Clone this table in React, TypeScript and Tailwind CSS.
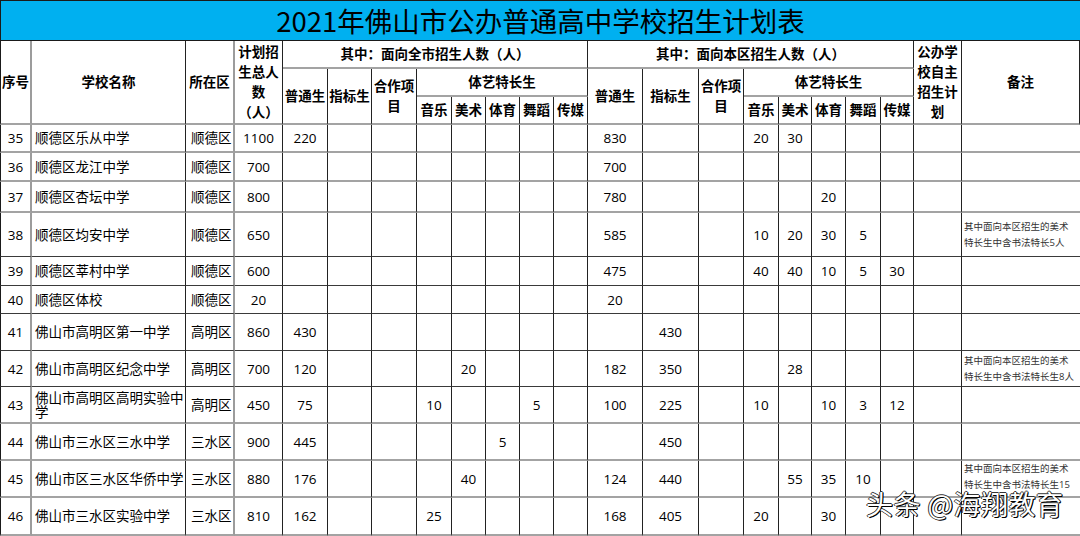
const FONT = "font-['Open_Sans','Noto_Sans_CJK_SC',sans-serif]";

type Row = {
  no: string;
  name: string;
  district: string;
  total: string;
  vals: Record<number, string>;
  note?: string[];
  noteTop?: boolean;
  gray: boolean;
};

const rows: Row[] = [
  { no: "35", name: "顺德区乐从中学", district: "顺德区", total: "1100", vals: { 4: "220", 12: "830", 15: "20", 16: "30" }, gray: true },
  { no: "36", name: "顺德区龙江中学", district: "顺德区", total: "700", vals: { 12: "700" }, gray: true },
  { no: "37", name: "顺德区杏坛中学", district: "顺德区", total: "800", vals: { 12: "780", 17: "20" }, gray: true },
  {
    no: "38", name: "顺德区均安中学", district: "顺德区", total: "650",
    vals: { 12: "585", 15: "10", 16: "20", 17: "30", 18: "5" },
    note: ["其中面向本区招生的美术", "特长生中含书法特长5人"], gray: false,
  },
  { no: "39", name: "顺德区莘村中学", district: "顺德区", total: "600", vals: { 12: "475", 15: "40", 16: "40", 17: "10", 18: "5", 19: "30" }, gray: false },
  { no: "40", name: "顺德区体校", district: "顺德区", total: "20", vals: { 12: "20" }, gray: false },
  { no: "41", name: "佛山市高明区第一中学", district: "高明区", total: "860", vals: { 4: "430", 13: "430" }, gray: false },
  {
    no: "42", name: "佛山市高明区纪念中学", district: "高明区", total: "700",
    vals: { 4: "120", 8: "20", 12: "182", 13: "350", 16: "28" },
    note: ["其中面向本区招生的美术", "特长生中含书法特长生8人"], gray: false,
  },
  {
    no: "43", name: "佛山市高明区高明实验中学", district: "高明区", total: "450",
    vals: { 4: "75", 7: "10", 10: "5", 12: "100", 13: "225", 15: "10", 17: "10", 18: "3", 19: "12" }, gray: true,
  },
  { no: "44", name: "佛山市三水区三水中学", district: "三水区", total: "900", vals: { 4: "445", 9: "5", 13: "450" }, gray: true },
  {
    no: "45", name: "佛山市区三水区华侨中学", district: "三水区", total: "880",
    vals: { 4: "176", 8: "40", 12: "124", 13: "440", 16: "55", 17: "35", 18: "10" },
    note: ["其中面向本区招生的美术", "特长生中含书法特长生15"], noteTop: true, gray: true,
  },
  { no: "46", name: "佛山市三水区实验中学", district: "三水区", total: "810", vals: { 4: "162", 7: "25", 12: "168", 13: "405", 15: "20", 17: "30" }, gray: true },
];

// right border per column: 序号 and 所在区 have the lighter double rule
function rightBorder(col: number) {
  return col === 0 || col === 2
    ? "border-r-2 border-r-[#9c9c9c]"
    : "border-r border-r-[#222222]";
}

const GRAY_B = "border-b-2 border-b-[#a3a3a3]";
const DARK_B = "border-b border-b-[#3a3a3a]";

function Head({
  children,
  col,
  span = "",
}: {
  children: React.ReactNode;
  col: number;
  span?: string;
}) {
  return (
    <div
      className={`flex items-center justify-center text-center font-bold text-[13.5px] leading-[20px] text-black ${span} ${rightBorder(col)} ${GRAY_B} ${col === 0 ? "border-l border-l-[#1a1a1a]" : ""}`}
    >
      <div>{children}</div>
    </div>
  );
}

const subs = ["音乐", "美术", "体育", "舞蹈", "传媒"];

function HeaderCells() {
  return (
    <>
      <Head col={0} span="row-span-3">序号</Head>
      <Head col={1} span="row-span-3">学校名称</Head>
      <Head col={2} span="row-span-3">所在区</Head>
      <Head col={3} span="row-span-3">
        计划招<br />生总人<br />数<br />（人）
      </Head>
      <Head col={11} span="col-span-8">其中：面向全市招生人数（人）</Head>
      <Head col={19} span="col-span-8">其中：面向本区招生人数（人）</Head>
      <Head col={20} span="row-span-3">
        公办学<br />校自主<br />招生计<br />划
      </Head>
      <Head col={21} span="row-span-3">备注</Head>

      <Head col={4} span="row-span-2">普通生</Head>
      <Head col={5} span="row-span-2">指标生</Head>
      <Head col={6} span="row-span-2">
        合作项<br />目
      </Head>
      <Head col={11} span="col-span-5">体艺特长生</Head>
      <Head col={12} span="row-span-2">普通生</Head>
      <Head col={13} span="row-span-2">指标生</Head>
      <Head col={14} span="row-span-2">
        合作项<br />目
      </Head>
      <Head col={19} span="col-span-5">体艺特长生</Head>

      {subs.map((s, i) => (
        <Head key={"l" + s} col={7 + i}>{s}</Head>
      ))}
      {subs.map((s, i) => (
        <Head key={"r" + s} col={15 + i}>{s}</Head>
      ))}
    </>
  );
}

function DataRow({ row }: { row: Row }) {
  const bottom = row.gray ? GRAY_B : DARK_B;
  const cells: React.ReactNode[] = [];
  for (let c = 0; c < 21; c++) {
    let content = "";
    let align = "justify-center text-center";
    if (c === 0) content = row.no;
    else if (c === 1) {
      content = row.name;
      align = "justify-start text-left pl-[3px]";
    } else if (c === 2) {
      content = row.district;
      align = "justify-start text-left pl-[5px]";
    } else if (c === 3) content = row.total;
    else content = row.vals[c] ?? "";
    cells.push(
      <div
        key={c}
        className={`flex items-center overflow-hidden text-[13.5px] leading-[14px] text-black ${align} ${rightBorder(c)} ${bottom} ${c === 0 ? "border-l border-l-[#1a1a1a]" : ""}`}
      >
        <span className="text-black">{content}</span>
      </div>
    );
  }
  cells.push(
    <div
      key="note"
      className={`flex overflow-hidden pl-[2px] text-[9.5px] leading-[16px] text-[#333333] ${row.noteTop ? "items-start" : "items-center"} ${bottom}`}
    >
      {row.note && (
        <div className="whitespace-nowrap">
          {row.note.map((l) => (
            <div key={l}>{l}</div>
          ))}
        </div>
      )}
    </div>
  );
  return <>{cells}</>;
}

export default function App() {
  return (
    <div className={`relative w-[1080px] h-[536px] overflow-hidden bg-white antialiased ${FONT}`}>
      <div className="flex h-[41px] items-center justify-center border-t border-l border-b border-[#1a1a1a] bg-[#00b0f0] text-[27.5px] leading-none text-black font-['Noto_Sans_CJK_SC',sans-serif]">
        2021年佛山市公办普通高中学校招生计划表
      </div>
      <div className="grid grid-cols-[32px_154px_49px_48px_45px_44px_45px_35px_34px_34px_34px_34px_55px_56px_45px_35px_33px_34px_35px_33px_48px_118px] grid-rows-[28px_28px_28px_28px_29px_31px_44px_29px_28px_37px_36px_37px_37px_37px_38px]">
        <HeaderCells />
        {rows.map((r) => (
          <DataRow key={r.no} row={r} />
        ))}
      </div>
      <div className="absolute left-[866px] top-[490px] text-[27px] leading-none tracking-[0.5px] text-white font-['Noto_Sans_CJK_SC',sans-serif] [text-shadow:1px_1px_0_#000,-1px_0_0_#333,0_-1px_0_#333,1px_0_0_#000]">
        头条 @海翔教育
      </div>
    </div>
  );
}
